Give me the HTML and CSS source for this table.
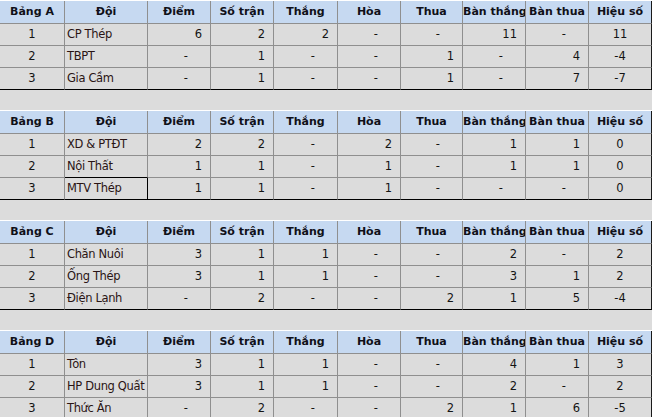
FILE: index.html
```html
<!DOCTYPE html>
<html lang="vi">
<head>
<meta charset="utf-8">
<title>Bảng xếp hạng</title>
<link rel="stylesheet" href="styles.css">
</head>
<body>
<main class="sheet">
  <section class="group">
    <div class="h">Bảng A</div><div class="h">Đội</div><div class="h">Điểm</div><div class="h">Số trận</div><div class="h">Thắng</div><div class="h">Hòa</div><div class="h">Thua</div><div class="h">Bàn thắng</div><div class="h">Bàn thua</div><div class="h last">Hiệu số</div>
    <div class="c">1</div><div class="t">CP Thép</div><div class="n">6</div><div class="n">2</div><div class="n">2</div><div class="d">-</div><div class="d">-</div><div class="n">11</div><div class="d">-</div><div class="c last">11</div>
    <div class="c">2</div><div class="t">TBPT</div><div class="d">-</div><div class="n">1</div><div class="d">-</div><div class="d">-</div><div class="n">1</div><div class="d">-</div><div class="n">4</div><div class="c last">-4</div>
    <div class="c end">3</div><div class="t end">Gia Cầm</div><div class="d end">-</div><div class="n end">1</div><div class="d end">-</div><div class="d end">-</div><div class="n end">1</div><div class="d end">-</div><div class="n end">7</div><div class="c last end">-7</div>
  </section>
  <section class="group">
    <div class="h">Bảng B</div><div class="h">Đội</div><div class="h">Điểm</div><div class="h">Số trận</div><div class="h">Thắng</div><div class="h">Hòa</div><div class="h">Thua</div><div class="h">Bàn thắng</div><div class="h">Bàn thua</div><div class="h last">Hiệu số</div>
    <div class="c">1</div><div class="t">XD &amp; PTĐT</div><div class="n">2</div><div class="n">2</div><div class="d">-</div><div class="n">2</div><div class="d">-</div><div class="n">1</div><div class="n">1</div><div class="c last">0</div>
    <div class="c">2</div><div class="t mark-below">Nội Thất</div><div class="n">1</div><div class="n">1</div><div class="d">-</div><div class="n">1</div><div class="d">-</div><div class="n">1</div><div class="n">1</div><div class="c last">0</div>
    <div class="c end">3</div><div class="t end mark-right">MTV Thép</div><div class="n end">1</div><div class="n end">1</div><div class="d end">-</div><div class="n end">1</div><div class="d end">-</div><div class="d end">-</div><div class="d end">-</div><div class="c last end">0</div>
  </section>
  <section class="group">
    <div class="h">Bảng C</div><div class="h">Đội</div><div class="h">Điểm</div><div class="h">Số trận</div><div class="h">Thắng</div><div class="h">Hòa</div><div class="h">Thua</div><div class="h">Bàn thắng</div><div class="h">Bàn thua</div><div class="h last">Hiệu số</div>
    <div class="c">1</div><div class="t">Chăn Nuôi</div><div class="n">3</div><div class="n">1</div><div class="n">1</div><div class="d">-</div><div class="d">-</div><div class="n">2</div><div class="d">-</div><div class="c last">2</div>
    <div class="c">2</div><div class="t">Ống Thép</div><div class="n">3</div><div class="n">1</div><div class="n">1</div><div class="d">-</div><div class="d">-</div><div class="n">3</div><div class="n">1</div><div class="c last">2</div>
    <div class="c end">3</div><div class="t end">Điện Lạnh</div><div class="d end">-</div><div class="n end">2</div><div class="d end">-</div><div class="d end">-</div><div class="n end">2</div><div class="n end">1</div><div class="n end">5</div><div class="c last end">-4</div>
  </section>
  <section class="group">
    <div class="h">Bảng D</div><div class="h">Đội</div><div class="h">Điểm</div><div class="h">Số trận</div><div class="h">Thắng</div><div class="h">Hòa</div><div class="h">Thua</div><div class="h">Bàn thắng</div><div class="h">Bàn thua</div><div class="h last">Hiệu số</div>
    <div class="c">1</div><div class="t">Tôn</div><div class="n">3</div><div class="n">1</div><div class="n">1</div><div class="d">-</div><div class="d">-</div><div class="n">4</div><div class="n">1</div><div class="c last">3</div>
    <div class="c">2</div><div class="t">HP Dung Quất</div><div class="n">3</div><div class="n">1</div><div class="n">1</div><div class="d">-</div><div class="d">-</div><div class="n">2</div><div class="d">-</div><div class="c last">2</div>
    <div class="c end">3</div><div class="t end">Thức Ăn</div><div class="d end">-</div><div class="n end">2</div><div class="d end">-</div><div class="d end">-</div><div class="n end">2</div><div class="n end">1</div><div class="n end">6</div><div class="c last end">-5</div>
  </section>
</main>
</body>
</html>
```

FILE: styles.css
```css
html, body {
  margin: 0;
  padding: 0;
  overflow: hidden;
  background: #dcdcdc;
}

.sheet {
  display: flex;
  flex-direction: column;
  gap: 20px;
  font-family: "DejaVu Sans", Verdana, sans-serif;
  font-size: 11.5px;
  color: #141414;
}

.group {
  display: grid;
  grid-template-columns: 65px 83px 63px 63px 64px 63px 62px 63px 63px 63px;
  grid-template-rows: 23px 22px 22px 22px;
  border-top: 1px solid #ffffff;
}

.group > div {
  box-sizing: border-box;
  border-right: 1px solid #8f8f8f;
  border-bottom: 1px solid #8f8f8f;
  line-height: 21px;
  white-space: nowrap;
  overflow: hidden;
}

.group > .h {
  line-height: 22px;
  background: #c6d9f1;
  font-size: 11px;
  font-weight: bold;
  text-align: center;
  color: #101018;
}

.c {
  text-align: center;
}

.group > .t {
  text-align: left;
  padding-left: 2px;
  letter-spacing: -0.35px;
  color: #2a1414;
  overflow: visible;
}

.n {
  text-align: right;
  padding-right: 8px;
}

.d {
  text-align: right;
  padding-right: 22px;
}

.group > .last {
  border-right-color: #1a1a1a;
}

.group > .end {
  border-bottom-color: #000000;
}

.group > .mark-below {
  border-bottom-color: #000000;
}

.group > .mark-right {
  border-right-color: #000000;
}
```
